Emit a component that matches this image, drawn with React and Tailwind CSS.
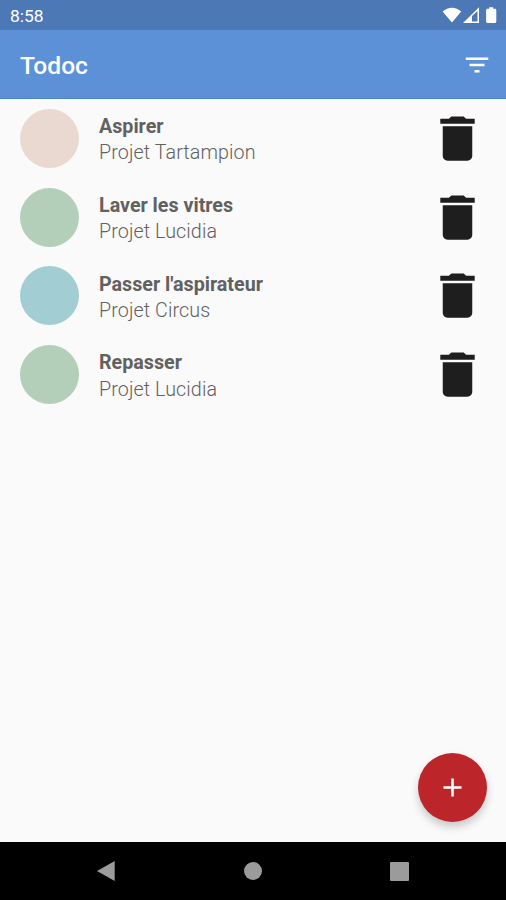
// src/App.jsx

const tasks = [
  { id: 1, name: 'Aspirer', project: 'Projet Tartampion', color: 'bg-[#ead9d0]' },
  { id: 2, name: 'Laver les vitres', project: 'Projet Lucidia', color: 'bg-[#b3ceb9]' },
  { id: 3, name: "Passer l'aspirateur", project: 'Projet Circus', color: 'bg-[#a2ced3]' },
  { id: 4, name: 'Repasser', project: 'Projet Lucidia', color: 'bg-[#b3ceb9]' },
];

function StatusBar() {
  return (
    <div className="flex h-[30px] shrink-0 items-center justify-between bg-[#4d78b6] pl-[10px] pr-2 text-white">
      <span className="mt-[3px] text-[17.4px] leading-none">8:58</span>
      <svg width="58" height="18" viewBox="0 0 58 18" fill="currentColor">
        <path d="M2.6 5.6C8 .5 15.8.5 21.2 5.6L11.9 16.6z" />
        <path fillRule="evenodd" d="M39 1.2V17H23zM32 10v5.4h5.5V4.9z" />
        <path d="M49.2 1.3h4v1.5h1.6c.9 0 1.5.6 1.5 1.5v11.1c0 .9-.6 1.500-1.500 1.500h-7.200c-.9 0-1.500-.6-1.500-1.500V4.300c0-.9.6-1.500 1.500-1.500h1.600z" />
      </svg>
    </div>
  );
}

function Toolbar() {
  return (
    <header className="flex h-[69px] shrink-0 items-center justify-between border-b border-[#4b87c9] bg-[#5c90d7] pl-5 pr-[14px] text-white">
      <h1 className="mt-1 text-[24.6px] leading-none font-medium">Todoc</h1>
      <svg width="30" height="30" viewBox="0 0 24 24" fill="currentColor" className="mt-[2px]">
        <path d="M10 18h4v-2h-4v2zM3 6v2h18V6H3zm3 7h12v-2H6v2z" />
      </svg>
    </header>
  );
}

function TaskRow({ task }) {
  return (
    <li className="flex h-[78.8px] items-center px-5">
      <div className={`size-[59px] shrink-0 rounded-full ${task.color}`} />
      <div className="mt-[4.2px] ml-5 flex-1 text-[19.7px] leading-[26.5px] text-[#616161]">
        <p className="font-bold">{task.name}</p>
        <p className="font-light tracking-[0.1px]">{task.project}</p>
      </div>
      <button type="button" aria-label="Supprimer" className="-mr-px">
        <svg width="59" height="59" viewBox="0 0 24 24" className="fill-[#1e1e1e]">
          <path d="M6 19c0 1.1.9 2 2 2h8c1.1 0 2-.9 2-2V7H6v12zM19 4h-3.500l-1-1h-5l-1 1H5v2h14V4z" />
        </svg>
      </button>
    </li>
  );
}

function NavBar() {
  return (
    <nav className="flex h-[58px] shrink-0 items-center justify-between bg-black pl-[97px] pr-[97px]">
      <svg width="19" height="22" viewBox="1 0 19 22" className="fill-[#9b9b9b]">
        <path d="M1 11 18.700 1v20z" />
      </svg>
      <div className="size-[18px] rounded-full bg-[#9b9b9b]" />
      <div className="size-[19px] rounded-[1px] bg-[#9b9b9b]" />
    </nav>
  );
}

export default function App() {
  return (
    <div className="flex h-[900px] w-[506px] flex-col overflow-hidden bg-[#fafafa] font-['Roboto',sans-serif]">
      <StatusBar />
      <Toolbar />
      <main className="relative flex-1">
        <ul>
          {tasks.map((task) => (
            <TaskRow key={task.id} task={task} />
          ))}
        </ul>
        <button
          type="button"
          aria-label="Ajouter"
          className="absolute right-[19px] bottom-5 flex size-[69px] items-center justify-center rounded-full bg-[#bc262b] shadow-[0_5px_9px_rgba(0,0,0,0.2)]"
        >
          <svg width="31" height="31" viewBox="0 0 24 24" className="fill-white">
            <path d="M19 13h-6v6h-2v-6H5v-2h6V5h2v6h6v2z" />
          </svg>
        </button>
      </main>
      <NavBar />
    </div>
  );
}
